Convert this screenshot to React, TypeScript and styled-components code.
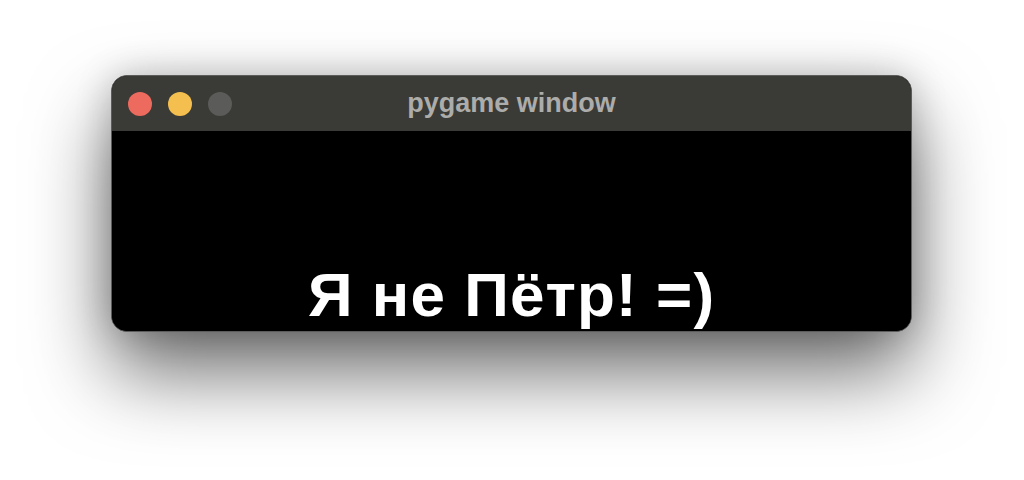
import React from "react";
import styled, { createGlobalStyle } from "styled-components";

const Global = createGlobalStyle`
  html, body { margin: 0; padding: 0; background: #ffffff; }
  body { font-family: "Liberation Sans", Arial, sans-serif; }
`;

const Page = styled.div`
  width: 1024px;
  height: 480px;
  display: flex;
  justify-content: center;
  align-items: flex-start;
  padding-top: 75px;
  box-sizing: border-box;
  overflow: hidden;
`;

const Window = styled.div`
  width: 801px;
  height: 257px;
  box-sizing: border-box;
  border: 1px solid #5c5c5a;
  border-radius: 16px;
  overflow: hidden;
  display: flex;
  flex-direction: column;
  background: #000;
  box-shadow: 0 40px 80px rgba(0, 0, 0, 0.58), 0 0 36px rgba(0, 0, 0, 0.2);
  margin-left: -1px;
`;

const TitleBar = styled.div`
  height: 55px;
  flex: none;
  background: #3a3a36;
  display: grid;
  grid-template-columns: 1fr auto 1fr;
  align-items: center;
  padding: 0 16px;
`;

const Lights = styled.div`
  display: flex;
  gap: 16px;
`;

const Light = styled.span<{ $color: string }>`
  width: 24px;
  height: 24px;
  border-radius: 50%;
  background: ${(p) => p.$color};
`;

const Title = styled.div`
  color: #acacaa;
  font-family: "Liberation Sans", Arial, sans-serif;
  font-weight: 700;
  font-size: 27px;
`;

const Content = styled.div`
  flex: 1;
  background: #000;
  display: flex;
  flex-direction: column;
  justify-content: flex-end;
  align-items: center;
  overflow: hidden;
`;

const Message = styled.div`
  color: #ffffff;
  font-family: "Liberation Sans", Arial, sans-serif;
  font-weight: 700;
  font-size: 62px;
  line-height: 62px;
  letter-spacing: 1.1px;
  margin-bottom: 5px;
  white-space: nowrap;
`;

export default function App() {
  return (
    <>
      <Global />
      <Page>
        <Window>
          <TitleBar>
            <Lights>
              <Light $color="#ed6a5e" />
              <Light $color="#f4bf4f" />
              <Light $color="#5b5b59" />
            </Lights>
            <Title>pygame window</Title>
            <div />
          </TitleBar>
          <Content>
            <Message>Я не Пётр! =)</Message>
          </Content>
        </Window>
      </Page>
    </>
  );
}
